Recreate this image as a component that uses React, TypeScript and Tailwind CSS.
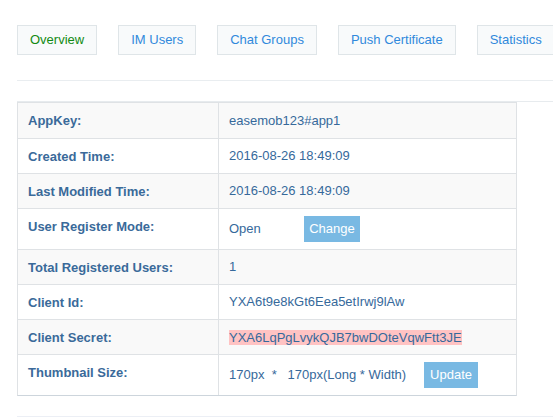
import React from "react";

const rows: { label: string; tall?: boolean; striped: boolean; value: React.ReactNode }[] = [
  { label: "AppKey:", striped: true, value: <span>easemob123#app1</span> },
  { label: "Created Time:", striped: false, value: <span>2016-08-26 18:49:09</span> },
  { label: "Last Modified Time:", striped: true, value: <span>2016-08-26 18:49:09</span> },
  {
    label: "User Register Mode:",
    striped: false,
    tall: true,
    value: (
      <>
        <span className="inline-block w-[75px]">Open</span>
        <button className="h-[26px] w-[56px] bg-[#79b9e3] text-white text-[13px] leading-[26px] text-center">Change</button>
      </>
    ),
  },
  { label: "Total Registered Users:", striped: true, value: <span>1</span> },
  { label: "Client Id:", striped: false, value: <span>YXA6t9e8kGt6Eea5etIrwj9lAw</span> },
  {
    label: "Client Secret:",
    striped: true,
    value: <span className="bg-[#ffc3c3] leading-[15px]">YXA6LqPgLvykQJB7bwDOteVqwFtt3JE</span>,
  },
  {
    label: "Thumbnail Size:",
    striped: false,
    tall: true,
    value: (
      <>
        <span className="mr-[18px]">170px&nbsp;&nbsp;*&nbsp;&nbsp;&nbsp;170px(Long * Width)</span>
        <button className="h-[26px] w-[54px] bg-[#79b9e3] text-white text-[13px] leading-[26px] text-center">Update</button>
      </>
    ),
  },
];

const tabs = ["Overview", "IM Users", "Chat Groups", "Push Certificate", "Statistics"];

export default function App() {
  return (
    <div className="w-[553px] h-[420px] overflow-hidden bg-white font-['Liberation_Sans',Arial,sans-serif] text-[13px]">
      <div className="pl-[17px] pt-[25px]">
        <div className="flex gap-[21px] whitespace-nowrap">
          {tabs.map((t, i) => (
            <div
              key={t}
              className={
                "h-[30px] px-[12px] border border-[#dfe5e8] bg-[#f8fafb] flex items-center shrink-0 " +
                (i === 0 ? "text-[#138a13]" : "text-[#3089dc]")
              }
            >
              {t}
            </div>
          ))}
        </div>
        <div className="mt-[25px] border-t border-[#e9edf0]" />
        <div className="mt-[20px] border-t border-[#e7ebee]" />
        <div className="w-[500px] border-x border-t border-b border-[#dfe2e5] border-b-[#cdd5dc] text-[#36699b]">
          {rows.map((r, i) => (
            <div
              key={r.label}
              className={
                "flex " +
                (i > 0 ? "border-t border-[#dfe2e5] " : "") +
                (r.striped ? "bg-[#f9f9f9] " : "bg-white ") +
                (r.tall ? "h-[41px]" : "h-[35px]")
              }
            >
              <div className="w-[201px] shrink-0 border-r border-[#dfe2e5] pl-[10px] pt-[8px] leading-[20px] font-bold text-[#3a6a9a]">
                {r.label}
              </div>
              <div className="flex-1 pl-[10px] flex items-center leading-[20px] whitespace-nowrap">{r.value}</div>
            </div>
          ))}
        </div>
        <div className="mt-[20px] border-t border-[#eceff5]" />
      </div>
    </div>
  );
}
